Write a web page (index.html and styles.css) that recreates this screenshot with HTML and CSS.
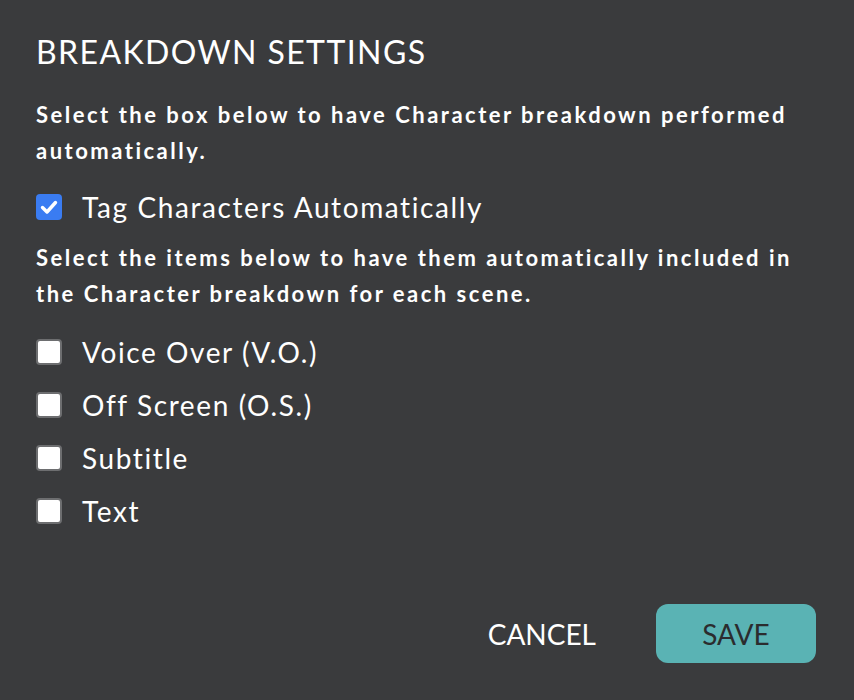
FILE: index.html
```html
<!DOCTYPE html>
<html lang="en">
<head>
  <meta charset="UTF-8" />
  <meta name="viewport" content="width=device-width, initial-scale=1.0"/>
  <title>Breakdown Settings</title>
  <link rel="stylesheet" href="styles.css">
</head>
<body>

<div class="dialog">
  <h1 class="title">BREAKDOWN SETTINGS</h1>

  <p class="hint">Select the box below to have Character breakdown performed automatically.</p>

  <div class="options options-auto">
    <label class="option">
      <span class="box checked">
        <svg viewBox="0 0 26 26" width="26" height="26"><path d="M6.5 13.5 L11 18 L19.5 8.5" fill="none" stroke="#fff" stroke-width="3.4" stroke-linecap="round" stroke-linejoin="round"/></svg>
      </span>
      Tag Characters Automatically
    </label>
  </div>

  <p class="hint hint-tight">Select the items below to have them automatically included in the Character breakdown for each scene.</p>

  <div class="options">
    <label class="option"><span class="box"></span>Voice Over (V.O.)</label>
    <label class="option"><span class="box"></span>Off Screen (O.S.)</label>
    <label class="option"><span class="box"></span>Subtitle</label>
    <label class="option"><span class="box"></span>Text</label>
  </div>

  <div class="actions">
    <button class="cancel-btn">CANCEL</button>
    <button class="save-btn">SAVE</button>
  </div>
</div>

</body>
</html>
```

FILE: styles.css
```css
body {
  background: #3a3b3d;
  color: #fff;
  font-family: Lato, "Open Sans", sans-serif;
  margin: 0;
}
.dialog {
  padding: 32px 38px 0 36px;
  display: flex;
  flex-direction: column;
}
h1.title {
  margin: 0;
  font-size: 32px;
  line-height: 40px;
  font-weight: 400;
  letter-spacing: 1.4px;
}
.hint {
  margin: 25px 0 0;
  font-size: 22px;
  line-height: 36px;
  font-weight: 700;
  letter-spacing: 2.5px;
}
.hint-tight {
  margin-top: 7px;
}
.options {
  margin-top: 13px;
}
.options-auto {
  margin-top: 11px;
}
.option {
  display: flex;
  align-items: center;
  gap: 20px;
  height: 53px;
  font-size: 28px;
  letter-spacing: 1.6px;
}
.box {
  width: 22px;
  height: 22px;
  border: 2px solid #6d6e70;
  border-radius: 4px;
  background: #fff;
  flex-shrink: 0;
}
.box.checked {
  width: 26px;
  height: 26px;
  border: none;
  background: #3a7cf2;
  display: flex;
}
.actions {
  display: flex;
  justify-content: flex-end;
  align-items: center;
  gap: 60px;
  margin-top: 67px;
}
.cancel-btn, .save-btn {
  font-family: Lato, "Open Sans", sans-serif;
  font-size: 28px;
  border: none;
  cursor: pointer;
}
.cancel-btn {
  background: none;
  color: #fff;
  padding: 0;
}
.save-btn {
  background: #5ab3b4;
  color: #2b2c2e;
  width: 160px;
  height: 59px;
  border-radius: 12px;
}
```
